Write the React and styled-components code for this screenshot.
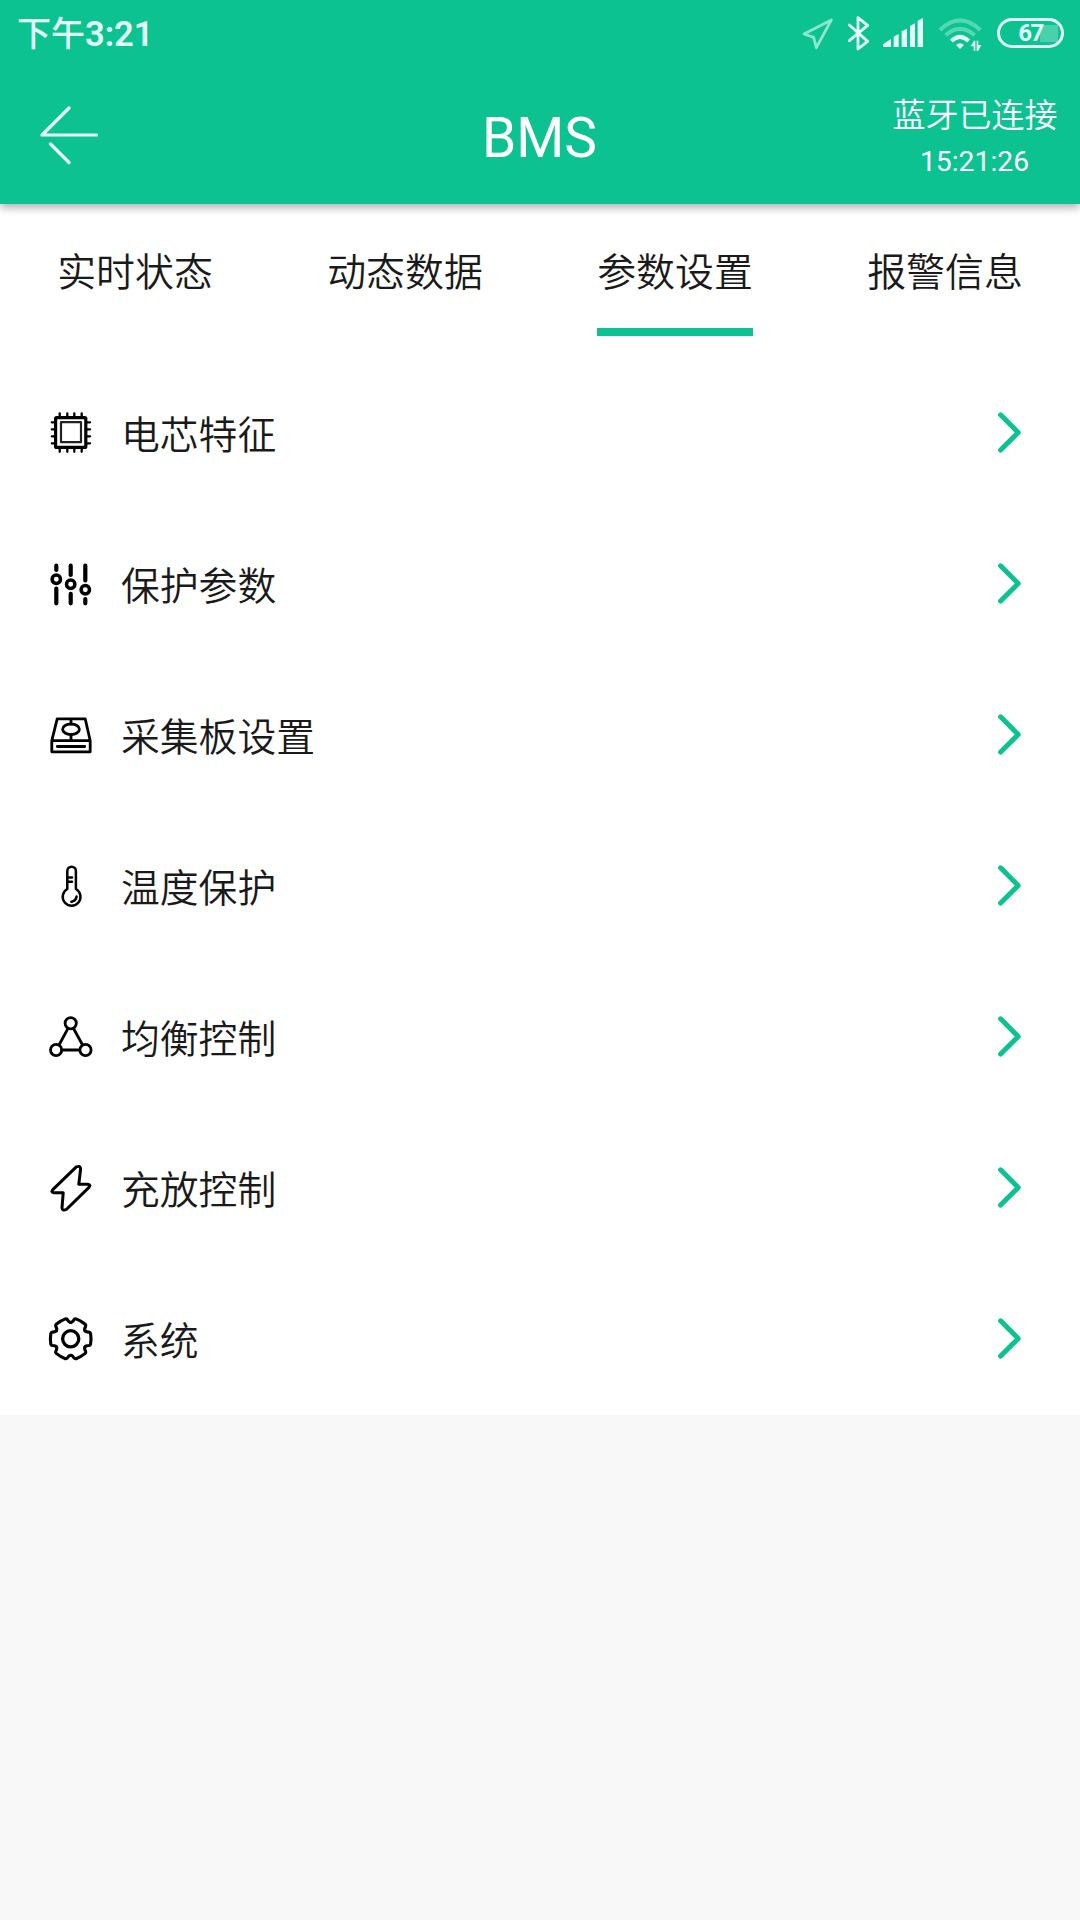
import { useState } from "react";
import styled, { createGlobalStyle } from "styled-components";

const TABS = ["实时状态", "动态数据", "参数设置", "报警信息"];

const MENU = [
  { label: "电芯特征", icon: ChipIcon },
  { label: "保护参数", icon: SlidersIcon },
  { label: "采集板设置", icon: BoardIcon },
  { label: "温度保护", icon: ThermometerIcon },
  { label: "均衡控制", icon: BalanceIcon },
  { label: "充放控制", icon: BoltIcon },
  { label: "系统", icon: GearIcon },
];

export default function App() {
  const [active, setActive] = useState(2);

  return (
    <Page>
      <GlobalStyle />
      <Header>
        <StatusBar>
          <Clock>
            下午<b>3:21</b>
          </Clock>
          <StatusIcons />
        </StatusBar>
        <TitleBar>
          <Back aria-label="back">
            <svg width="60" height="60" viewBox="0 0 60 60">
              <path d="M31 3 4 30H58.5M12.5 39 31 57.5" />
            </svg>
          </Back>
          <Title>BMS</Title>
          <Connection>
            <State>蓝牙已连接</State>
            <Time>15:21:26</Time>
          </Connection>
        </TitleBar>
      </Header>
      <Tabs>
        {TABS.map((tab, i) => (
          <Tab key={tab} $active={i === active} onClick={() => setActive(i)}>
            <span>{tab}</span>
          </Tab>
        ))}
      </Tabs>
      <List>
        {MENU.map(({ label, icon: Icon }) => (
          <Row key={label}>
            <Icon />
            <Label>{label}</Label>
            <Chevron width="28" height="44" viewBox="0 0 28 44">
              <path d="M3.6 4.8 21.2 22.4 3.6 40" />
            </Chevron>
          </Row>
        ))}
      </List>
    </Page>
  );
}

function StatusIcons() {
  return (
    <>
      <StatusIcon width="32" viewBox="66 42 96 117" $gap={13} $dim>
        <path d="M154 60 109 143 101 112 72 102Z" />
      </StatusIcon>
      <StatusIcon width="24" viewBox="201 42 72 117" $gap={11}>
        <path d="M208 75 263 124 234 147V53L263 76 208 122" />
      </StatusIcon>
      <StatusIcon width="42" viewBox="306 42 126 117" $gap={14} $solid>
        <path d="M309 141V133L333 117V141ZM341 141V110L356 102V141ZM365 141V94L381 86V141ZM390 141V78L405 70V141ZM413 141V62L429 54V141Z" />
      </StatusIcon>
      <StatusIcon width="45" viewBox="474 42 135 117" $gap={13}>
        <g strokeWidth="12" strokeLinecap="butt">
          <path opacity="0.35" d="M480 90Q540 32 601 90" />
          <path opacity="0.35" d="M497 106Q540 67 584 106" />
          <path d="M514 123Q540 98 566 123" />
        </g>
        <path
          fill="currentColor"
          stroke="none"
          d="M528 135Q540 124 552 135L540 147Z"
        />
        <path
          fill="currentColor"
          stroke="none"
          d="M572 139 582 122H586V152H581V139ZM590 122H595V135H604L594 153H590Z"
        />
      </StatusIcon>
      <Battery>67</Battery>
    </>
  );
}

function ChipIcon() {
  return (
    <Icon viewBox="0 0 48 48">
      <rect x="9.6" y="8.6" width="30.2" height="29.8" rx="1" strokeWidth="3.2" />
      <rect x="15" y="13.2" width="20" height="20" stroke="#222" strokeWidth="2.2" />
      <path
        strokeWidth="2.3"
        d="M13.7 4.3V8M21.3 4.3V8M28.3 4.3V8M35.7 4.3V8M13.7 39V42.8M21.3 39V42.8M28.3 39V42.8M35.7 39V42.8M5.8 13.3H9M5.8 20.3H9M5.8 27.3H9M5.8 34.3H9M40 13.3H44M40 20.3H44M40 27.3H44M40 34.3H44"
      />
    </Icon>
  );
}

function SlidersIcon() {
  return (
    <Icon viewBox="0 0 48 48">
      <path
        strokeWidth="4.2"
        d="M10.3 5.7V10M10.3 28.5V43.3M24.7 5.7V15M24.7 33.8V43.3M39.3 5.7V20.5M39.3 39V43.3"
      />
      <g strokeWidth="3.5">
        <circle cx="10.3" cy="19.3" r="4.2" />
        <circle cx="24.7" cy="24.3" r="4.2" />
        <circle cx="39.3" cy="29.7" r="4.2" />
      </g>
    </Icon>
  );
}

function BoardIcon() {
  return (
    <Icon viewBox="0 0 48 48">
      <path d="M11.2 7.8H39.2L44.2 29.7V40.8H5.8V29.7ZM5.8 29.7H44.2M11.3 35.5H38.7M25 7.8V13M25 23.5V29.7" />
      <ellipse cx="25" cy="18.3" rx="8.4" ry="5.3" />
    </Icon>
  );
}

function ThermometerIcon() {
  return (
    <Icon viewBox="0 0 48 48">
      <path
        strokeWidth="2.5"
        d="M21.3 27V9A4.3 4.3 0 0 1 29.9 9V27A8.9 8.9 0 1 1 21.3 27ZM21.5 15.4H26M21.5 19.8H26M30.6 34.5Q30 39 25.4 39.8"
      />
    </Icon>
  );
}

function BalanceIcon() {
  return (
    <Icon viewBox="0 0 48 48">
      <circle cx="24.7" cy="10.3" r="5.6" />
      <circle cx="10.1" cy="37" r="5.6" />
      <circle cx="39.5" cy="37" r="5.6" />
      <path d="M22 15.3 13 32M27.4 15.3 36.6 32M15.8 37H33.8" />
    </Icon>
  );
}

function BoltIcon() {
  return (
    <Icon viewBox="0 0 48 48">
      <path
        strokeWidth="3"
        d="M30.3 2.9Q34.6 1.2 34.6 5L32.8 20.2H41.8Q45.2 20.6 43 23.4L20.6 45.2Q16.2 47.6 16 43.8L17.2 28.8H8Q4.6 28.4 6.8 25.6Z"
      />
    </Icon>
  );
}

function GearIcon() {
  const sides = [0, 60, 120, 180, 240, 300];
  return (
    <Icon viewBox="0 0 48 48">
      <circle cx="24.7" cy="23.8" r="8.1" strokeWidth="3.3" />
      {sides.map((deg) => (
        <path
          key={deg}
          strokeWidth="3.1"
          transform={`translate(24.7 23.8) rotate(${deg})`}
          d="M14.2 -8.2C15 -6.8 16.6 -6.7 18.2 -6.7Q19.4 -6.6 19.9 -5.3Q20.7 0 19.9 5.3Q19.4 6.6 18.2 6.7C16.6 6.7 15 6.8 14.2 8.2"
        />
      ))}
    </Icon>
  );
}

const GlobalStyle = createGlobalStyle`
  body {
    margin: 0;
    background: #f8f8f8;
    font-family: Roboto, "Noto Sans CJK SC", sans-serif;
  }
`;

const Page = styled.div`
  width: 1080px;
  height: 1920px;
  overflow: hidden;
  background: #f8f8f8;
`;

const Header = styled.header`
  position: relative;
  height: 204px;
  color: #fff;
  background: #0cc291;
  box-shadow: 0 3px 9px rgba(0, 0, 0, 0.35);
`;

const StatusBar = styled.div`
  display: flex;
  align-items: center;
  height: 67px;
  padding: 0 15px 0 17px;
  color: #e2fff6;
`;

const Clock = styled.div`
  margin: 1px auto 0 0;
  font-size: 34px;
  font-weight: 500;
  line-height: 40px;

  b {
    font-size: 34.5px;
    font-weight: 600;
  }
`;

const StatusIcon = styled.svg`
  height: 39px;
  margin-right: ${({ $gap }) => $gap}px;
  fill: ${({ $solid }) => ($solid ? "currentColor" : "none")};
  stroke: ${({ $solid }) => ($solid ? "none" : "currentColor")};
  stroke-width: 8.5;
  stroke-linejoin: round;
  stroke-linecap: round;
  opacity: ${({ $dim }) => ($dim ? 0.6 : 1)};
`;

const Battery = styled.div`
  box-sizing: border-box;
  width: 67px;
  height: 30px;
  margin: 0 1px 2px;
  border: 3px solid #e2fff6;
  border-radius: 15px;
  background: linear-gradient(#49d1ab, #49d1ab) 40px 4px / 18px 17px no-repeat;
  font-size: 24px;
  font-weight: 700;
  line-height: 25px;
  letter-spacing: -1.5px;
  text-align: center;
`;

const TitleBar = styled.div`
  display: grid;
  grid-template-columns: 210px 1fr 210px;
  height: 137px;
`;

const Back = styled.button`
  display: flex;
  align-items: flex-start;
  padding: 38px 0 0 38px;
  border: 0;
  background: none;

  path {
    fill: none;
    stroke: #e6fff8;
    stroke-width: 3.2;
    stroke-linecap: round;
    stroke-linejoin: round;
  }
`;

const Title = styled.h1`
  margin: 0;
  padding: 39px 1px 0 0;
  font-size: 55px;
  font-weight: 400;
  line-height: 64px;
  text-align: center;
`;

const Connection = styled.div`
  padding-top: 26px;
  text-align: center;
`;

const State = styled.div`
  font-size: 33px;
  font-weight: 350;
  line-height: 46px;
`;

const Time = styled.div`
  padding-right: 1px;
  font-size: 28.3px;
  line-height: 45px;
`;

const Tabs = styled.nav`
  display: grid;
  grid-template-columns: repeat(4, 1fr);
  height: 154px;
  background: #fff;
`;

const Tab = styled.div`
  display: flex;
  justify-content: center;
  align-items: flex-start;
  color: #1a1a1a;
  font-size: 38.9px;
  font-weight: 350;
  line-height: 56px;
  cursor: pointer;

  span {
    box-sizing: border-box;
    height: 132px;
    padding-top: 41px;
    border-bottom: 8px solid
      ${({ $active }) => ($active ? "#0cc291" : "transparent")};
  }
`;

const List = styled.div`
  background: #fff;
`;

const Row = styled.div`
  display: flex;
  align-items: center;
  height: 151px;
  padding: 0 55px 0 46px;
  cursor: pointer;
`;

const Icon = styled.svg`
  width: 48px;
  height: 48px;
  margin-bottom: 1px;
  fill: none;
  stroke: #000;
  stroke-width: 2.8;
  stroke-linecap: round;
  stroke-linejoin: round;
`;

const Label = styled.div`
  flex: 1;
  padding: 5px 0 0 27px;
  color: #1a1a1a;
  font-size: 38.8px;
  font-weight: 350;
  line-height: 56px;
`;

const Chevron = styled.svg`
  margin-bottom: 3px;
  fill: none;
  stroke: #0cc291;
  stroke-width: 5;
  stroke-linecap: round;
  stroke-linejoin: round;
`;
